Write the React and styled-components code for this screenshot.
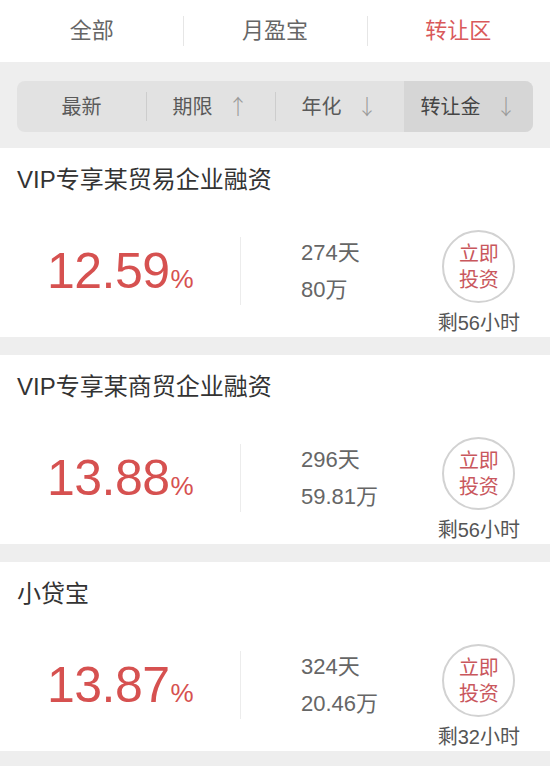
import React from "react";
import styled, { createGlobalStyle } from "styled-components";

const GlobalStyle = createGlobalStyle`
  body {
    margin: 0;
    background: #eeeeee;
    font-family: "Liberation Sans", "Noto Sans CJK SC", sans-serif;
  }
`;

const tabs = ["全部", "月盈宝", "转让区"];

const sorts = [
  { label: "最新" },
  { label: "期限", arrow: "↑" },
  { label: "年化", arrow: "↓" },
  { label: "转让金", arrow: "↓", active: true },
];

const products = [
  { title: "VIP专享某贸易企业融资", rate: "12.59", days: "274天", amount: "80万", left: "剩56小时" },
  { title: "VIP专享某商贸企业融资", rate: "13.88", days: "296天", amount: "59.81万", left: "剩56小时" },
  { title: "小贷宝", rate: "13.87", days: "324天", amount: "20.46万", left: "剩32小时" },
];

export default function App() {
  return (
    <>
      <GlobalStyle />
      <Page>
        <TabBar>
          {tabs.map((t, i) => (
            <Tab key={t} $active={i === 2} $first={i === 0}>
              {t}
            </Tab>
          ))}
        </TabBar>

        <FilterBand>
          <SortControl>
            {sorts.map((s, i) => (
              <SortItem key={s.label} $active={s.active} $divider={i === 1 || i === 2}>
                {s.label}
                {s.arrow && <Arrow>{s.arrow}</Arrow>}
              </SortItem>
            ))}
          </SortControl>
        </FilterBand>

        <List>
          {products.map((p) => (
            <Card key={p.title}>
              <Title>{p.title}</Title>
              <Body>
                <RateCol>
                  <Rate>
                    {p.rate}
                    <Percent>%</Percent>
                  </Rate>
                </RateCol>
                <VDivider />
                <TermCol>
                  <div>{p.days}</div>
                  <div>{p.amount}</div>
                </TermCol>
                <ActionCol>
                  <InvestButton>
                    立即
                    <br />
                    投资
                  </InvestButton>
                  <Remaining>{p.left}</Remaining>
                </ActionCol>
              </Body>
            </Card>
          ))}
        </List>
      </Page>
    </>
  );
}

const Page = styled.div`
  width: 550px;
  min-height: 766px;
  background: #eeeeee;
`;

const TabBar = styled.div`
  display: flex;
  height: 62px;
  background: #ffffff;
`;

const Tab = styled.div`
  flex: 1;
  display: flex;
  align-items: center;
  justify-content: center;
  position: relative;
  padding-bottom: 7px;
  box-sizing: border-box;
  font-size: 22px;
  color: ${(p) => (p.$active ? "#d9595b" : "#666666")};

  &::before {
    content: "";
    display: ${(p) => (p.$first ? "none" : "block")};
    position: absolute;
    left: 0;
    top: 16px;
    height: 30px;
    width: 1px;
    background: #e6e6e6;
  }
`;

const FilterBand = styled.div`
  padding: 19px 17px 16px 17px;
  background: #eeeeee;
`;

const SortControl = styled.div`
  display: flex;
  height: 51px;
  border-radius: 8px;
  overflow: hidden;
  background: #e2e2e2;
`;

const SortItem = styled.div`
  flex: 1;
  display: flex;
  align-items: center;
  justify-content: center;
  position: relative;
  padding-bottom: 3px;
  box-sizing: border-box;
  font-size: 20px;
  color: ${(p) => (p.$active ? "#444444" : "#5a5a5a")};
  background: ${(p) => (p.$active ? "#d6d6d6" : "transparent")};

  &::before {
    content: "";
    display: ${(p) => (p.$divider ? "block" : "none")};
    position: absolute;
    left: 0;
    top: 11px;
    height: 29px;
    width: 1px;
    background: #cdcdcd;
  }
`;

const Arrow = styled.span`
  margin-left: 15px;
  color: #9a9a9a;
  font-family: "Noto Sans CJK SC", sans-serif;
  font-size: 21px;
  font-weight: 300;
`;

const List = styled.div`
  display: flex;
  flex-direction: column;
  gap: 18px;
`;

const Card = styled.div`
  height: 189px;
  background: #ffffff;
  display: flex;
  flex-direction: column;
`;

const Title = styled.div`
  height: 64px;
  line-height: 64px;
  padding-left: 17px;
  font-size: 24px;
  color: #333333;
`;

const Body = styled.div`
  flex: 1;
  display: flex;
  align-items: center;
  padding-bottom: 8px;
`;

const RateCol = styled.div`
  width: 240px;
  display: flex;
  justify-content: center;
`;

const Rate = styled.div`
  font-size: 50px;
  color: #d65150;
  line-height: 1;
  letter-spacing: -0.5px;
`;

const Percent = styled.span`
  font-size: 26px;
  margin-left: 1px;
`;

const VDivider = styled.div`
  width: 1px;
  height: 68px;
  background: #ececec;
`;

const TermCol = styled.div`
  padding-left: 60px;
  font-size: 22px;
  line-height: 37px;
  color: #666666;
`;

const ActionCol = styled.div`
  margin-left: auto;
  margin-right: 30px;
  align-self: flex-end;
  margin-bottom: -5px;
  display: flex;
  flex-direction: column;
  align-items: center;
  gap: 9px;
`;

const InvestButton = styled.div`
  width: 69px;
  height: 69px;
  border: 2px solid #d2d2d2;
  border-radius: 50%;
  display: flex;
  align-items: center;
  justify-content: center;
  text-align: center;
  font-size: 20px;
  line-height: 26px;
  color: #c9575d;
`;

const Remaining = styled.div`
  font-size: 20px;
  line-height: 22px;
  color: #555555;
  white-space: nowrap;
`;
